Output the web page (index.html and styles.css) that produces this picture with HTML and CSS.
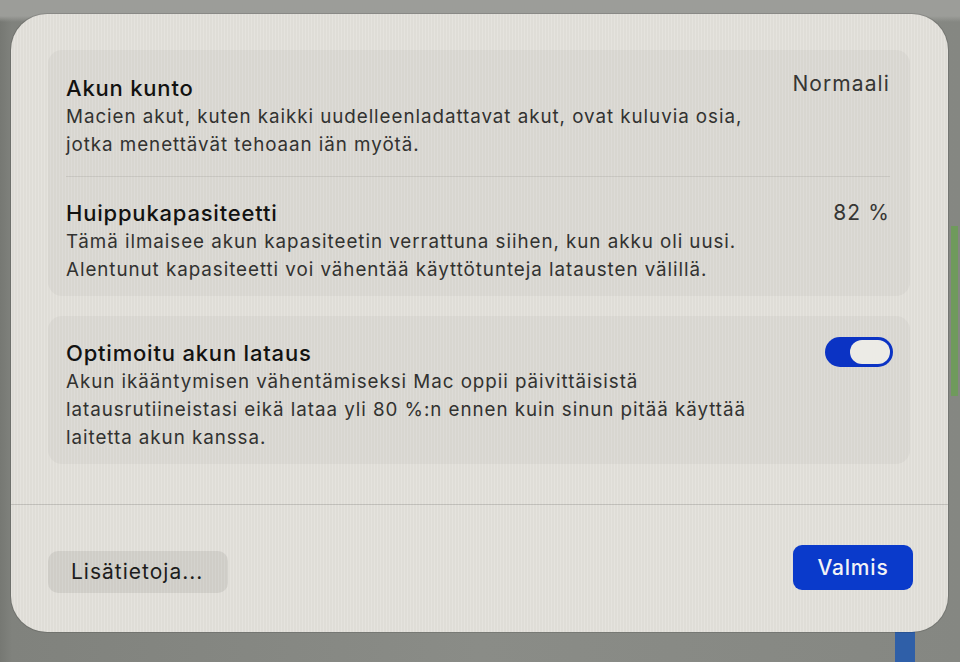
FILE: index.html
```html
<!DOCTYPE html>
<html lang="fi">
<head>
<meta charset="utf-8">
<title>Akun kunto</title>
<link rel="stylesheet" href="styles.css">
</head>
<body>
<div class="desk">
  <div class="side-green"></div>
  <div class="side-blue"></div>
  <div class="dialog">
    <div class="content">
      <section class="group">
        <div class="row first">
          <div class="text">
            <h2 class="title">Akun kunto</h2>
            <p class="desc">Macien akut, kuten kaikki uudelleenladattavat akut, ovat kuluvia osia,<br>jotka menettävät tehoaan iän myötä.</p>
          </div>
          <div class="value">Normaali</div>
        </div>
        <div class="sep"></div>
        <div class="row second">
          <div class="text">
            <h2 class="title">Huippukapasiteetti</h2>
            <p class="desc">Tämä ilmaisee akun kapasiteetin verrattuna siihen, kun akku oli uusi.<br>Alentunut kapasiteetti voi vähentää käyttötunteja latausten välillä.</p>
          </div>
          <div class="value">82 %</div>
        </div>
      </section>
      <section class="group g2">
        <div class="row third">
          <div class="text">
            <h2 class="title">Optimoitu akun lataus</h2>
            <p class="desc">Akun ikääntymisen vähentämiseksi Mac oppii päivittäisistä<br>latausrutiineistasi eikä lataa yli 80 %:n ennen kuin sinun pitää käyttää<br>laitetta akun kanssa.</p>
          </div>
          <div class="toggle"><span class="knob"></span></div>
        </div>
      </section>
    </div>
    <div class="footer">
      <button class="btn secondary">Lisätietoja...</button>
      <button class="btn primary">Valmis</button>
    </div>
  </div>
</div>
</body>
</html>
```

FILE: styles.css
```css
* { box-sizing: border-box; }
html, body { margin: 0; height: 100%; }
body {
  font-family: Inter, "Noto Sans", "DejaVu Sans", sans-serif;
  background: #7e807b;
  overflow: hidden;
}
.desk {
  position: relative;
  width: 960px;
  height: 662px;
  padding: 14px 12px 30px 11px;
  background:
    linear-gradient(180deg, #9c9d99 0px, #9c9d99 16px, transparent 22px),
    linear-gradient(90deg, #767873 0px, #80827d 12px, #8a8c87 50%, #858782 100%);
  display: flex;
}
.side-green {
  position: absolute;
  left: 951px; top: 226px;
  width: 7px; height: 170px;
  background: #6f9a5c;
}
.side-blue {
  position: absolute;
  left: 895px; top: 620px;
  width: 20px; height: 42px;
  background: #2f5fa8;
}
.dialog {
  position: relative;
  flex: 1;
  background-color: #e3e1db;
  background-image: repeating-linear-gradient(90deg, rgba(255,255,255,0.08) 0 1px, rgba(0,0,0,0.018) 1px 3px);
  border-radius: 36px;
  display: flex;
  flex-direction: column;
  box-shadow: 0 0 0 1px rgba(0,0,0,0.12);
}
.content {
  padding: 36px 38px 0 37px;
  display: flex;
  flex-direction: column;
  gap: 20px;
}
.group {
  background: rgba(0,0,0,0.03);
  border-radius: 14px;
  padding: 0 20px 0 18px;
}
.row {
  display: flex;
  justify-content: space-between;
  align-items: flex-start;
}
.row.first { padding: 25px 0 17px; }
.row.second { padding: 23px 0 12px; }
.row.third { padding: 24px 0 12px; }
.title {
  margin: 0 0 2px;
  font-size: 22px;
  line-height: 26px;
  font-weight: 450;
  color: #121211;
  letter-spacing: 0.8px;
}
.desc {
  margin: 0;
  font-size: 18.8px;
  line-height: 28px;
  color: #323230;
  letter-spacing: 0.95px;
}
.value {
  font-size: 21px;
  line-height: 26px;
  color: #363634;
  letter-spacing: 1.1px;
}
.first .value { margin-top: -4px; }
.sep {
  height: 1px;
  background: rgba(0,0,0,0.08);
}
.toggle {
  width: 68px;
  height: 30px;
  margin-top: -3px;
  margin-right: -3px;
  border-radius: 15px;
  background: #0b33c4;
  padding: 3px;
  display: flex;
  justify-content: flex-end;
}
.knob {
  width: 40px;
  height: 24px;
  border-radius: 12px;
  background: #ecebe6;
}
.footer {
  margin-top: 40px;
  border-top: 1px solid rgba(0,0,0,0.14);
  padding: 40px 35px 0 37px;
  display: flex;
  justify-content: space-between;
  align-items: flex-start;
}
.btn {
  font-family: Inter, "Noto Sans", sans-serif;
  border: none;
  font-size: 21px;
  line-height: 24px;
  cursor: default;
}
.btn.secondary {
  margin-top: 6px;
  width: 180px;
  height: 42px;
  border-radius: 10px;
  background: rgba(0,0,0,0.07);
  color: #1d1d1c;
  font-weight: 400;
  letter-spacing: 1px;
  text-align: left;
  padding-left: 23px;
}
.btn.primary {
  width: 120px;
  height: 45px;
  border-radius: 9px;
  background: #0a3acb;
  color: #f2f2f6;
  font-weight: 500;
  letter-spacing: 0.8px;
}
```
